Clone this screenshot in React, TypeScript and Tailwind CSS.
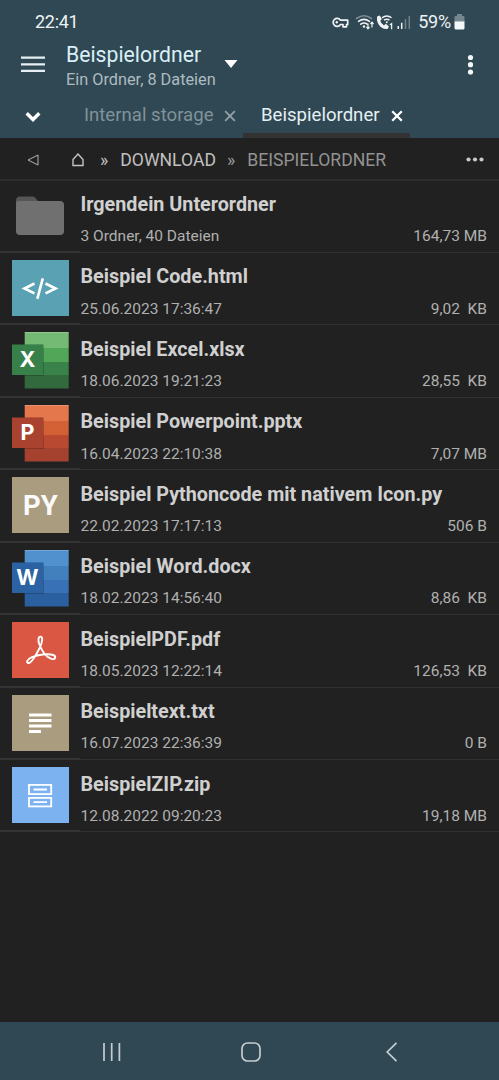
import type { ReactNode } from "react";

type FileEntry = {
  name: string;
  info: string;
  size: string;
  icon: ReactNode;
};

function FolderIcon() {
  return (
    <svg width="56" height="56" viewBox="0 0 56 56">
      <path d="M4 12a4 4 0 0 1 4-3.500h12.500a4 4 0 0 1 2.500 1l3 3.500L50 20H4z" fill="#555" />
      <path d="M4 15.500q0-2.500 3-2.500h41q4 0 4 4v26q0 4-4 4H8q-4 0-4-4z" fill="#707070" />
    </svg>
  );
}

function CodeIcon() {
  return (
    <svg width="57" height="56" viewBox="0 0 57 56" className="bg-[#5aa1b3]">
      <path
        d="M22.500 23.500 12.500 28.500l10 4.900M33.500 23.500l10 5-10 4.900"
        fill="none"
        stroke="#fff"
        strokeWidth="2.700"
      />
      <path d="M30.800 18.300 25.300 38.800" stroke="#fff" strokeWidth="2.600" />
    </svg>
  );
}

function OfficeIcon({ letter, bands, tile }: { letter: string; bands: string[]; tile: string }) {
  return (
    <svg width="57" height="57" viewBox="0 0 57 57">
      <rect x="12.700" y="0" width="44" height="16" fill={bands[0]} />
      <rect x="12.700" y="16" width="44" height="14" fill={bands[1]} />
      <rect x="12.700" y="30" width="44" height="13" fill={bands[2]} />
      <rect x="12.700" y="43" width="44" height="13.500" fill={bands[3]} />
      <rect x="12.700" y="0" width="44" height="1" fill="#fff" opacity="0.200" />
      <rect x="12.700" y="12.500" width="19.300" height="31.500" fill="#000" opacity="0.200" />
      <rect x="0" y="12.500" width="31" height="30.500" fill={tile} />
      <text
        x="15.500"
        y="35.300"
        textAnchor="middle"
        fill="#fff"
        fontFamily="Inter, sans-serif"
        fontWeight="700"
        fontSize="21.500"
      >
        {letter}
      </text>
    </svg>
  );
}

function PythonIcon() {
  return (
    <div className="flex h-14 w-[57px] items-center justify-center bg-[#aa9d7f] text-[27.500px] font-bold text-[#fafafa]">
      PY
    </div>
  );
}

function PdfIcon() {
  return (
    <svg width="57" height="56" viewBox="0 0 57 56" className="bg-[#d95743]">
      <path
        d="M28.500 14.600C26.100 14.600 26 18.600 27.200 22 29.500 28 34 35.200 39.500 36.900 43.500 38 44.500 34.200 41.200 33 36 31.300 26 32.800 20 35.200 16 37 13.600 40.200 16 41 19.500 42 24.500 32 27.600 26 30.700 20 31 14.600 28.500 14.600z"
        fill="none"
        stroke="#fff"
        strokeWidth="1.900"
        strokeLinejoin="round"
      />
    </svg>
  );
}

function TextIcon() {
  return (
    <svg width="57" height="56" viewBox="0 0 57 56" className="bg-[#aa9d7f]" fill="#fff">
      <rect x="17" y="18.500" width="22.500" height="3" />
      <rect x="17" y="24" width="22.500" height="3" />
      <rect x="17" y="29.500" width="22.500" height="3" />
      <rect x="17" y="35" width="12" height="3" />
    </svg>
  );
}

function ZipIcon() {
  return (
    <svg width="57" height="56" viewBox="0 0 57 56" className="bg-[#7db2f0]">
      <g fill="none" stroke="#fff" strokeWidth="1.800">
        <rect x="17" y="17.900" width="22.200" height="9.200" />
        <rect x="17" y="30.900" width="22.200" height="8.500" />
        <path d="M21.500 22.500h13.500M21.500 35.200h13.500" />
      </g>
    </svg>
  );
}

const files: FileEntry[] = [
  { name: "Irgendein Unterordner", info: "3 Ordner, 40 Dateien", size: "164,73 MB", icon: <FolderIcon /> },
  { name: "Beispiel Code.html", info: "25.06.2023 17:36:47", size: "9,02  KB", icon: <CodeIcon /> },
  {
    name: "Beispiel Excel.xlsx",
    info: "18.06.2023 19:21:23",
    size: "28,55  KB",
    icon: <OfficeIcon letter="X" tile="#38804a" bands={["#74b974", "#51a657", "#39824a", "#32693d"]} />,
  },
  {
    name: "Beispiel Powerpoint.pptx",
    info: "16.04.2023 22:10:38",
    size: "7,07 MB",
    icon: <OfficeIcon letter="P" tile="#a9432f" bands={["#e4774c", "#d46036", "#b94930", "#a5422f"]} />,
  },
  { name: "Beispiel Pythoncode mit nativem Icon.py", info: "22.02.2023 17:17:13", size: "506 B", icon: <PythonIcon /> },
  {
    name: "Beispiel Word.docx",
    info: "18.02.2023 14:56:40",
    size: "8,86  KB",
    icon: <OfficeIcon letter="W" tile="#2a62a3" bands={["#5191cd", "#427fbd", "#3871b5", "#2b60a0"]} />,
  },
  { name: "BeispielPDF.pdf", info: "18.05.2023 12:22:14", size: "126,53  KB", icon: <PdfIcon /> },
  { name: "Beispieltext.txt", info: "16.07.2023 22:36:39", size: "0 B", icon: <TextIcon /> },
  { name: "BeispielZIP.zip", info: "12.08.2022 09:20:23", size: "19,18 MB", icon: <ZipIcon /> },
];

function StatusBar() {
  return (
    <div className="flex h-[43px] items-center pr-[34px] pl-[35px] text-[18px] text-[#eef3f5]">
      <span className="tracking-[-0.300px]">22:41</span>
      <svg className="ml-auto" width="80" height="18" viewBox="0 0 80 18" fill="none" stroke="#eef3f5">
        <path
          d="M9.500 7.200a4 4 0 1 0 0 4.300H12v2.300h3.500v-2.300h1.200V7.200z"
          strokeWidth="1.700"
          strokeLinejoin="round"
        />
        <circle cx="5.800" cy="9.300" r="1.200" fill="#eef3f5" stroke="none" />
        <g strokeWidth="1.600" strokeLinecap="round">
          <path d="M25.500 5.500q7.500-5.500 15 0" opacity="0.400" />
          <path d="M27.500 8.400q5.500-4 11 0M29.800 11.200q3.200-2.300 6.400 0" />
        </g>
        <circle cx="33" cy="13.500" r="1.200" fill="#eef3f5" stroke="none" />
        <path d="M37 10.500v5M35.500 14l1.500 1.800 1.500-1.800M41 14.500v-5M39.500 11l1.500-1.800 1.500 1.800" strokeWidth="1.200" />
        <path
          d="M46.300 3.300 48.800 2.500l2 3.600-1.500 2q1 2.800 3.700 4.300l1.700-1.600 3.200 2.500-1 2.500c-6.700 1.600-12.500-6-10.600-12.500z"
          fill="#eef3f5"
          stroke="none"
        />
        <path d="M51 4.800q5-3.800 9.500 0M53 7.200q2.800-2 5.500 0" strokeWidth="1.500" />
        <circle cx="55.800" cy="9.300" r="1" fill="#eef3f5" stroke="none" />
        <path d="M58.800 11.700l1.800-1v5.500" strokeWidth="1.300" />
        <path d="M67.300 16v-3M70.700 16v-6.300" strokeWidth="1.500" />
        <path d="M74.500 16V6M78.300 16V3" strokeWidth="1.500" opacity="0.350" />
      </svg>
      <span className="ml-[7px] tracking-[-0.200px]">59%</span>
      <svg className="ml-[3px]" width="11" height="16" viewBox="0 0 11 16">
        <path d="M3 0h5v2h1.500q1 0 1 1v5H.5V3q0-1 1-1H3z" fill="#75868e" />
        <path d="M.5 7.500h10V14q0 1.500-1.500 1.500H2Q.5 15.500.5 14z" fill="#f5f8f9" />
      </svg>
    </div>
  );
}

function TitleBar() {
  return (
    <div className="flex h-[50px] items-start">
      <svg className="mt-3 ml-5" width="26" height="20" viewBox="0 0 26 20" stroke="#e6f0f4" strokeWidth="2.200">
        <path d="M1 2.700h24M1 9.300h24M1 15.900h24" />
      </svg>
      <div className="ml-5 w-[152px] whitespace-nowrap">
        <h1 className="text-[21.200px] leading-6 text-[#d9f0f7]">Beispielordner</h1>
        <p className="mt-[3px] text-[16.300px] leading-5 text-[#acbbc1]">Ein Ordner, 8 Dateien</p>
      </div>
      <svg className="mt-4 ml-[6px]" width="14" height="10" viewBox="0 0 14 10">
        <path d="M0.500 1h13L7 9z" fill="#fff" />
      </svg>
      <svg className="mt-[11px] mr-[25px] ml-auto" width="7" height="22" viewBox="0 0 7 22" fill="#f4f7f8">
        <circle cx="3.500" cy="3.500" r="2.600" />
        <circle cx="3.500" cy="10.700" r="2.600" />
        <circle cx="3.500" cy="18" r="2.600" />
      </svg>
    </div>
  );
}

function CloseIcon({ color, width }: { color: string; width: number }) {
  return (
    <svg width="12" height="12" viewBox="0 0 12 12">
      <path d="M1.200 1.200l9.600 9.600M10.800 1.200l-9.600 9.600" stroke={color} strokeWidth={width} />
    </svg>
  );
}

function Tabs() {
  return (
    <div className="flex h-[45px] text-[18.600px] whitespace-nowrap">
      <svg className="mt-[18px] ml-[25px]" width="16" height="12" viewBox="0 0 16 12">
        <path d="M1.700 2.200 8 8.500l6.300-6.300" fill="none" stroke="#fff" strokeWidth="3.400" />
      </svg>
      <div className="flex h-[45px] w-[202px] items-center justify-end pt-px pr-[7px]">
        <span className="mr-[10.500px] text-[#80929a]">Internal storage</span>
        <CloseIcon color="#93a2a9" width={1.800} />
      </div>
      <div className="flex h-[45px] w-[167px] items-center border-b-[5px] border-[#333] pt-[6px] pl-[18px]">
        <span className="mr-[11px] text-[#e4f0f4]">Beispielordner</span>
        <CloseIcon color="#fff" width={2.300} />
      </div>
    </div>
  );
}

function Breadcrumbs() {
  return (
    <nav className="flex h-[42.500px] items-center border-b-2 border-[#2d2d2d] pt-[3px] text-[17.600px] whitespace-nowrap text-[#c0c0c0]">
      <svg className="ml-[27px]" width="12" height="12" viewBox="0 0 12 12">
        <path d="M11 1v10L1 6z" fill="none" stroke="#b5b5b5" strokeWidth="1" />
      </svg>
      <svg className="ml-[33px]" width="12" height="14" viewBox="0 0 12 14">
        <path d="M1 12.500V6.500L6 1l5 5.500v6z" fill="none" stroke="#c4c4c4" strokeWidth="1.400" />
      </svg>
      <span className="ml-[16px]">»</span>
      <span className="ml-[12px]">DOWNLOAD</span>
      <span className="ml-[11px] text-[#999]">»</span>
      <span className="ml-[12px] text-[#929292]">BEISPIELORDNER</span>
      <svg className="mr-[15px] ml-auto" width="18" height="5" viewBox="0 0 18 5" fill="#c8c8c8">
        <circle cx="2.500" cy="2.500" r="2.100" />
        <circle cx="9" cy="2.500" r="2.100" />
        <circle cx="15.500" cy="2.500" r="2.100" />
      </svg>
    </nav>
  );
}

function FileRow({ file }: { file: FileEntry }) {
  return (
    <li className="flex h-[72.450px]">
      <div className="w-20 border-b-2 border-[#343434] pt-[7px] pl-3">{file.icon}</div>
      <div className="min-w-0 flex-1 border-b border-[#303030] pt-[12.500px] pr-3 pl-[0.500px] whitespace-pre">
        <h2 className="text-[19.750px] leading-6 font-bold text-[#d0d0d0]">{file.name}</h2>
        <div className="mt-[9.300px] flex justify-between text-[15.500px] leading-5 text-[#b0b0b0]">
          <span>{file.info}</span>
          <span>{file.size}</span>
        </div>
      </div>
    </li>
  );
}

function NavigationBar() {
  return (
    <footer className="flex h-[58px] items-center bg-[#304853] pt-[2px] pl-[102px]">
      <svg width="20" height="20" viewBox="0 0 20 20" stroke="#c5cdd1" strokeWidth="1.700">
        <path d="M2 1v18M9.700 1v18M17.400 1v18" />
      </svg>
      <svg className="ml-[119px]" width="20" height="20" viewBox="0 0 20 20">
        <rect x="1" y="1" width="18" height="18" rx="5.500" fill="none" stroke="#c5cdd1" strokeWidth="1.700" />
      </svg>
      <svg className="ml-[125px]" width="12" height="20" viewBox="0 0 12 20">
        <path d="M10.500 .8 1.200 10l9.300 9.200" fill="none" stroke="#c5cdd1" strokeWidth="1.700" />
      </svg>
    </footer>
  );
}

export default function App() {
  return (
    <div className="flex h-[1080px] w-[499px] flex-col overflow-hidden bg-[#212121] font-[Roboto,sans-serif]">
      <header className="bg-[#304853]">
        <StatusBar />
        <TitleBar />
        <Tabs />
      </header>
      <Breadcrumbs />
      <ul className="flex-1">
        {files.map((file) => (
          <FileRow key={file.name} file={file} />
        ))}
      </ul>
      <NavigationBar />
    </div>
  );
}
